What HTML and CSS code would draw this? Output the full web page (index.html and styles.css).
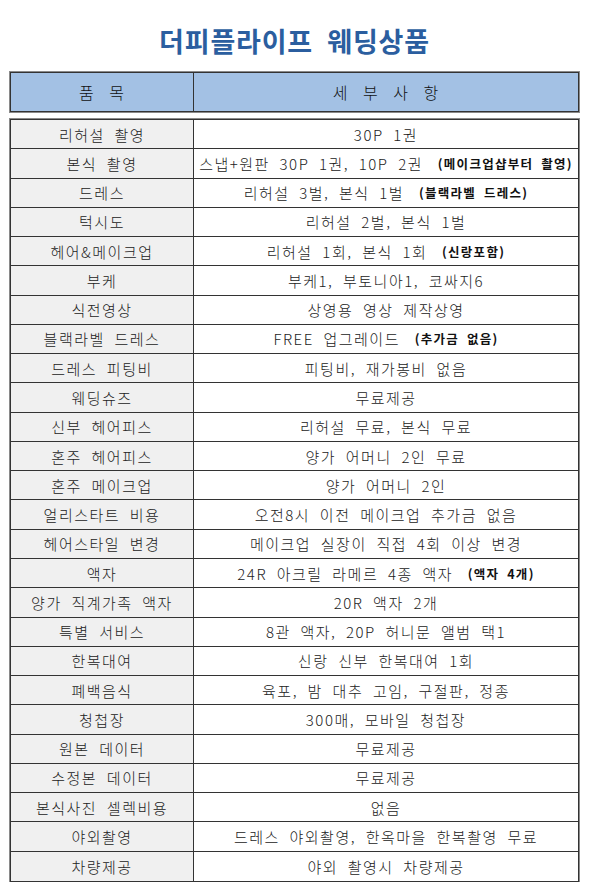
FILE: index.html
```html
<!DOCTYPE html>
<html lang="ko">
<head>
<meta charset="utf-8">
<link rel="stylesheet" href="styles.css">
</head>
<body>
<div class="page">
  <h1 class="title">더피플라이프 웨딩상품</h1>
  <div class="head">
    <div class="hcell hleft">품 목</div>
    <div class="hcell">세 부 사 항</div>
  </div>
  <div class="table">
    <div class="row"><div class="k">리허설 촬영</div><div class="v">30P 1권</div></div>
    <div class="row"><div class="k">본식 촬영</div><div class="v">스냅+원판 30P 1권, 10P 2권 <b>(메이크업샵부터 촬영)</b></div></div>
    <div class="row"><div class="k">드레스</div><div class="v">리허설 3벌, 본식 1벌 <b>(블랙라벨 드레스)</b></div></div>
    <div class="row"><div class="k">턱시도</div><div class="v">리허설 2벌, 본식 1벌</div></div>
    <div class="row"><div class="k">헤어&amp;메이크업</div><div class="v">리허설 1회, 본식 1회 <b>(신랑포함)</b></div></div>
    <div class="row"><div class="k">부케</div><div class="v">부케1, 부토니아1, 코싸지6</div></div>
    <div class="row"><div class="k">식전영상</div><div class="v">상영용 영상 제작상영</div></div>
    <div class="row"><div class="k">블랙라벨 드레스</div><div class="v">FREE 업그레이드 <b>(추가금 없음)</b></div></div>
    <div class="row"><div class="k">드레스 피팅비</div><div class="v">피팅비, 재가봉비 없음</div></div>
    <div class="row"><div class="k">웨딩슈즈</div><div class="v">무료제공</div></div>
    <div class="row"><div class="k">신부 헤어피스</div><div class="v">리허설 무료, 본식 무료</div></div>
    <div class="row"><div class="k">혼주 헤어피스</div><div class="v">양가 어머니 2인 무료</div></div>
    <div class="row"><div class="k">혼주 메이크업</div><div class="v">양가 어머니 2인</div></div>
    <div class="row"><div class="k">얼리스타트 비용</div><div class="v">오전8시 이전 메이크업 추가금 없음</div></div>
    <div class="row"><div class="k">헤어스타일 변경</div><div class="v">메이크업 실장이 직접 4회 이상 변경</div></div>
    <div class="row"><div class="k">액자</div><div class="v">24R 아크릴 라메르 4종 액자 <b>(액자 4개)</b></div></div>
    <div class="row"><div class="k">양가 직계가족 액자</div><div class="v">20R 액자 2개</div></div>
    <div class="row"><div class="k">특별 서비스</div><div class="v">8관 액자, 20P 허니문 앨범 택1</div></div>
    <div class="row"><div class="k">한복대여</div><div class="v">신랑 신부 한복대여 1회</div></div>
    <div class="row"><div class="k">폐백음식</div><div class="v">육포, 밤 대추 고임, 구절판, 정종</div></div>
    <div class="row"><div class="k">청첩장</div><div class="v">300매, 모바일 청첩장</div></div>
    <div class="row"><div class="k">원본 데이터</div><div class="v">무료제공</div></div>
    <div class="row"><div class="k">수정본 데이터</div><div class="v">무료제공</div></div>
    <div class="row"><div class="k">본식사진 셀렉비용</div><div class="v">없음</div></div>
    <div class="row"><div class="k">야외촬영</div><div class="v">드레스 야외촬영, 한옥마을 한복촬영 무료</div></div>
    <div class="row"><div class="k">차량제공</div><div class="v">야외 촬영시 차량제공</div></div>
  </div>
</div>
</body>
</html>
```

FILE: styles.css
```css
html, body {
  margin: 0;
  padding: 0;
  background: #ffffff;
}
body {
  font-family: "Noto Sans CJK KR", "Noto Sans", sans-serif;
  color: #222;
}
.page {
  width: 569px;
  padding: 0 0 0 10px;
}
.title {
  margin: 0;
  padding: 24px 0 0 0;
  height: 72px;
  box-sizing: border-box;
  text-align: center;
  font-size: 27px;
  line-height: 34px;
  font-weight: 700;
  color: #2b5e9f;
  letter-spacing: 0.8px;
  word-spacing: 6px;
}
.head {
  display: grid;
  grid-template-columns: 183px 1fr;
  height: 40px;
  box-sizing: border-box;
  background: #a3c1e4;
  border: 1px solid #333;
  box-shadow: 0 0 0 1px #8a8a8a;
}
.hcell {
  display: flex;
  align-items: center;
  justify-content: center;
  font-size: 16px;
  font-weight: 300;
  color: #111;
  letter-spacing: 1px;
  word-spacing: 9px;
}
.hleft {
  border-right: 1px solid #333;
}
.table {
  margin-top: 7px;
  border: 1px solid #333;
  box-shadow: 0 0 0 1px #8a8a8a;
}
.row {
  display: grid;
  grid-template-columns: 183px 1fr;
  height: 29.27px;
  border-bottom: 1px solid #333;
  box-sizing: border-box;
}
.row:last-child {
  border-bottom: 0;
}
.k, .v {
  display: flex;
  align-items: center;
  justify-content: center;
  font-size: 15px;
  font-weight: 300;
  letter-spacing: 1.5px;
  word-spacing: 4px;
  white-space: pre;
  color: #222;
}
.k {
  background: #f0f0f0;
  border-right: 1px solid #333;
}
.v b {
  font-size: 12.5px;
  font-weight: 700;
  margin-left: 5px;
  color: #111;
  letter-spacing: 1.3px;
  word-spacing: 3px;
}
```
